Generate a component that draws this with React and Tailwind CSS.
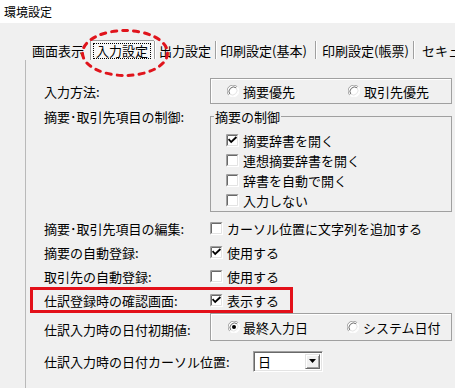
import React from "react";

const FONT = "font-['Noto_Sans_CJK_JP','Noto_Sans_CJK_SC',sans-serif]";

function Radio({ checked }) {
  return (
    <svg width="12" height="12" viewBox="0 0 12 12" className="shrink-0">
      <circle cx="6" cy="6" r="5.5" fill="#fff" />
      <path d="M10.2 1.8 A5.8 5.8 0 0 0 1.8 10.2" stroke="#a0a0a0" strokeWidth="1" fill="none" />
      <path d="M9.2 2.8 A4.6 4.6 0 0 0 2.8 9.2" stroke="#696969" strokeWidth="1" fill="none" />
      <path d="M1.8 10.2 A5.8 5.8 0 0 0 10.2 1.8" stroke="#ffffff" strokeWidth="1" fill="none" />
      <path d="M2.8 9.2 A4.6 4.6 0 0 0 9.2 2.8" stroke="#e3e3e3" strokeWidth="1" fill="none" />
      {checked && <circle cx="6" cy="6" r="2" fill="#000" />}
    </svg>
  );
}

function Check({ checked }) {
  return (
    <svg width="13" height="13" viewBox="0 0 13 13" className="shrink-0">
      <rect x="0" y="0" width="13" height="13" fill="#fff" />
      <path d="M0.5 12.5 V0.5 H12.5" stroke="#a0a0a0" fill="none" />
      <path d="M1.5 11.5 V1.5 H11.5" stroke="#696969" fill="none" />
      <path d="M0.5 12.5 H12.5 V0.5" stroke="#ffffff" fill="none" />
      <path d="M1.5 11.5 H11.5 V1.5" stroke="#e3e3e3" fill="none" />
      {checked && (
        <path d="M3.2 5.8 L5.2 8 L9.8 3.6" stroke="#000" strokeWidth="1.8" fill="none" strokeLinecap="square" />
      )}
    </svg>
  );
}

function Sep() {
  return <div className="w-[2px] h-[18px] border-l border-[#a0a0a0] bg-white shrink-0" />;
}

export default function App() {
  return (
    <div className={`relative w-[455px] h-[388px] overflow-hidden bg-[#f0f0f0] text-black text-[13px] leading-[13px] flex flex-col ${FONT}`}>
      <div className="h-[23px] shrink-0 bg-white flex items-center pl-[4px] text-[12px]">環境設定</div>

      {/* tab strip */}
      <div className="h-[37px] shrink-0 flex items-end">
        <div className="h-[20px] flex items-center whitespace-nowrap">
          <div className="w-[32px] shrink-0" />
          <span className="w-[58px] shrink-0">画面表示</span>
          <div className="w-[64px] h-[20px] shrink-0 border-l border-t border-[#a0a0a0] bg-[#f8f8f8] flex items-center pl-[2px]">
            <span className="h-[16px] flex items-center border border-dotted border-black px-[2px]">入力設定</span>
          </div>
          <Sep />
          <span className="ml-[3px] w-[56px] shrink-0">出力設定</span>
          <Sep />
          <span className="ml-[3px] w-[95px] shrink-0">印刷設定(基本)</span>
          <Sep />
          <span className="ml-[5px] w-[91px] shrink-0">印刷設定(帳票)</span>
          <Sep />
          <span className="ml-[7px] shrink-0">セキュリティ</span>
        </div>
      </div>

      {/* panel */}
      <div className="flex-1 ml-[25px] border-l border-[#b9b9b9] pl-[18px] pt-[18px] flex flex-col">
        {/* 入力方法 */}
        <div className="flex h-[26px] items-center">
          <span className="w-[166px] shrink-0">入力方法:</span>
          <div className="w-[242px] h-[26px] shrink-0 border border-[#a0a0a0] shadow-[inset_1px_1px_0_#fff] flex items-center pl-[16px]">
            <div className="w-[121px] flex items-center gap-[4px]"><Radio />摘要優先</div>
            <div className="flex items-center gap-[4px]"><Radio />取引先優先</div>
          </div>
        </div>

        {/* 摘要・取引先項目の制御 */}
        <div className="flex mt-[6px]">
          <span className="w-[166px] shrink-0 h-[13px]">摘要･取引先項目の制御:</span>
          <fieldset className="w-[242px] shrink-0 border border-[#a0a0a0] pl-[3px] pb-[1px] m-0">
            <legend className="px-[1px] leading-[13px]">摘要の制御</legend>
            <div className="pl-[12px] pt-[7px] flex flex-col">
              <div className="h-[20px] flex items-center gap-[4px]"><Check checked />摘要辞書を開く</div>
              <div className="h-[20px] flex items-center gap-[4px]"><Check />連想摘要辞書を開く</div>
              <div className="h-[20px] flex items-center gap-[4px]"><Check />辞書を自動で開く</div>
              <div className="h-[20px] flex items-center gap-[4px]"><Check />入力しない</div>
            </div>
          </fieldset>
        </div>

        <div className="mt-[4px] flex h-[24px] items-center">
          <span className="w-[166px] shrink-0">摘要･取引先項目の編集:</span>
          <div className="flex items-center gap-[4px]"><Check />カーソル位置に文字列を追加する</div>
        </div>
        <div className="flex h-[24px] items-center">
          <span className="w-[166px] shrink-0">摘要の自動登録:</span>
          <div className="flex items-center gap-[4px]"><Check checked />使用する</div>
        </div>
        <div className="flex h-[24px] items-center">
          <span className="w-[166px] shrink-0">取引先の自動登録:</span>
          <div className="flex items-center gap-[4px]"><Check />使用する</div>
        </div>
        <div className="flex h-[24px] items-center">
          <span className="w-[166px] shrink-0">仕訳登録時の確認画面:</span>
          <div className="flex items-center gap-[4px]"><Check checked />表示する</div>
        </div>

        {/* 日付初期値 */}
        <div className="mt-[1px] flex h-[28px] items-center">
          <span className="w-[166px] shrink-0 mt-[4px]">仕訳入力時の日付初期値:</span>
          <div className="w-[242px] h-[28px] shrink-0 border border-[#a0a0a0] shadow-[inset_1px_1px_0_#fff] flex items-center pl-[17px]">
            <div className="w-[119px] flex items-center gap-[3px]"><Radio checked />最終入力日</div>
            <div className="flex items-center gap-[4px]"><Radio />システム日付</div>
          </div>
        </div>

        {/* カーソル位置 */}
        <div className="mt-[9px] flex h-[22px] items-center">
          <span className="w-[209px] shrink-0 whitespace-nowrap">仕訳入力時の日付カーソル位置:</span>
          <div className="w-[70px] h-[21px] shrink-0 bg-white flex items-center justify-between border border-t-[#a0a0a0] border-l-[#a0a0a0] border-r-white border-b-white shadow-[inset_1px_1px_0_#696969,inset_-1px_-1px_0_#e3e3e3] pl-[4px] pr-[2px]">
            <span>日</span>
            <div className="w-[15px] h-[15px] bg-[#f0f0f0] border border-t-[#e3e3e3] border-l-[#e3e3e3] border-r-[#696969] border-b-[#696969] shadow-[inset_1px_1px_0_#fff,inset_-1px_-1px_0_#a0a0a0] flex items-center justify-center">
              <svg width="7" height="4" viewBox="0 0 7 4"><path d="M0 0 H7 L3.5 4 Z" fill="#000" /></svg>
            </div>
          </div>
        </div>
      </div>

      {/* annotations */}
      <svg className="absolute left-[81px] top-[29px]" width="88" height="48" viewBox="0 0 88 48">
        <ellipse cx="44" cy="24" rx="42.5" ry="22.5" fill="none" stroke="#e0141c" strokeWidth="3" strokeDasharray="5 6" strokeLinecap="round" />
      </svg>
      <div className="absolute left-[30px] top-[287px] w-[263px] h-[26px] border-[3px] border-[#e3101a]" />
    </div>
  );
}
